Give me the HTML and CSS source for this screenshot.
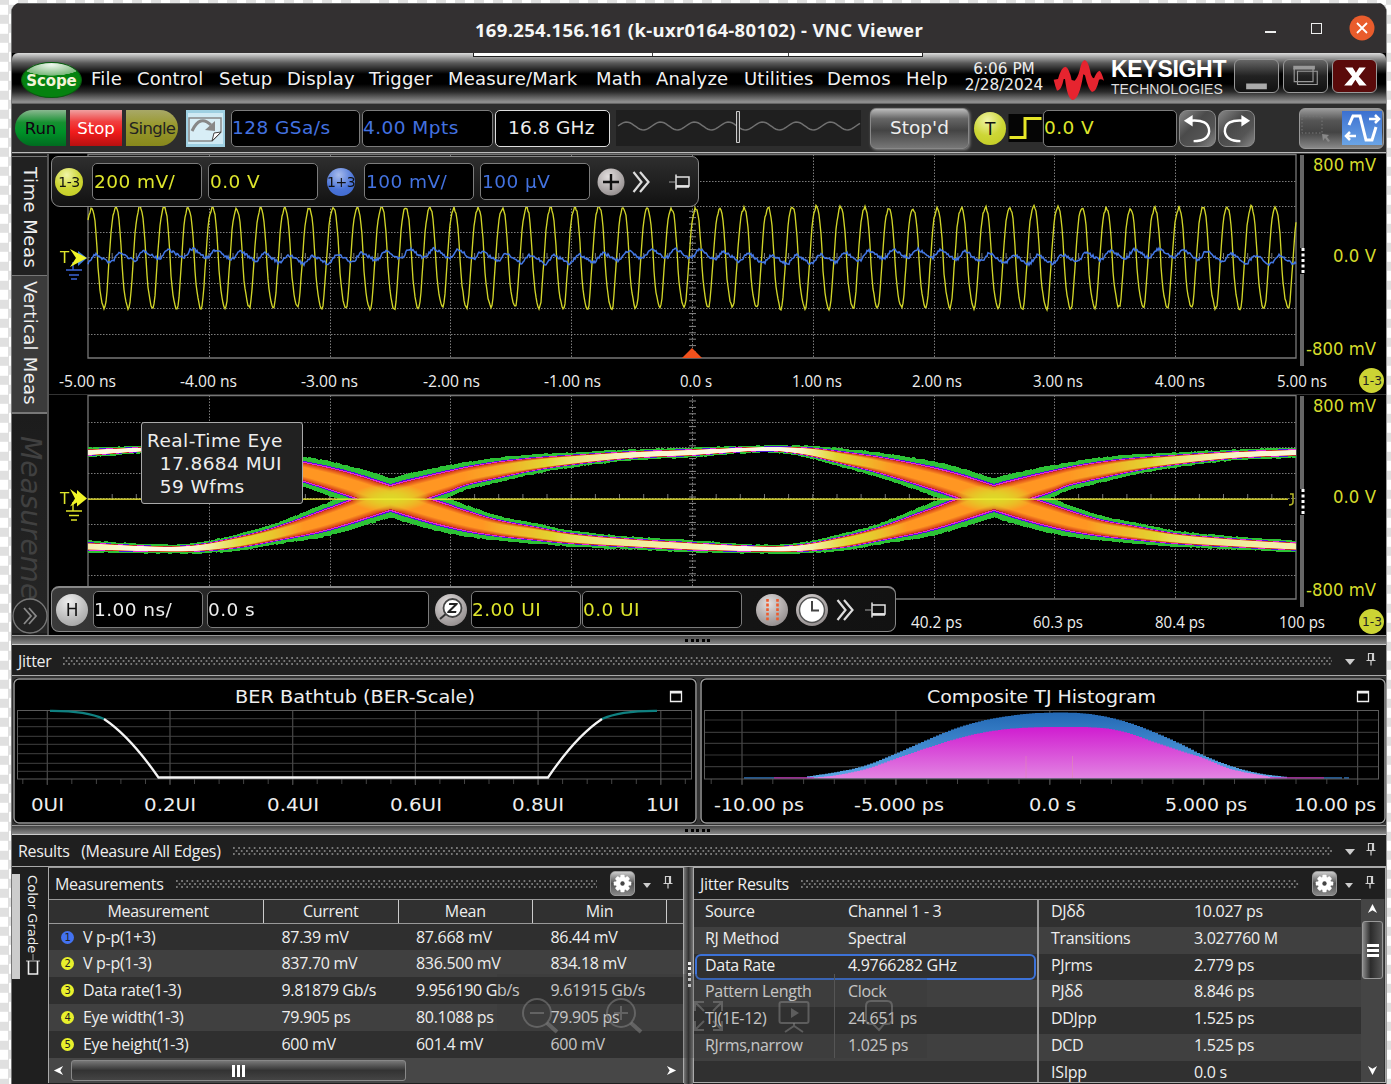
FILE: index.html
```html
<!DOCTYPE html>
<html lang="en">
<head>
<meta charset="utf-8">
<title>169.254.156.161 (k-uxr0164-80102) - VNC Viewer</title>
<link rel="stylesheet" href="styles.css">
</head>
<body>
<svg width="0" height="0" class="defs">
  <defs>
    <symbol id="pin-up" viewBox="0 0 10 14"><path d="M2.5 1.5h5v7h-5zM0.5 8.5h9M5 8.5v5M6.5 1.5v7" fill="none" stroke="#d0d0d0" stroke-width="1.2"/></symbol>
    <symbol id="pin-side" viewBox="0 0 24 16"><path d="M1 8h6" stroke="#777" stroke-width="1.5"/><path d="M8 0.5v15M8 3h13v9h-13" fill="none" stroke="#e4e4e4" stroke-width="1.5"/><path d="M8 12.5h13" stroke="#e4e4e4" stroke-width="2.5"/></symbol>
    <symbol id="chev" viewBox="0 0 18 22"><path d="M1.500 1l8 10-8 10M8 1l8.500 10-8.500 10" fill="none" stroke="#dcdcdc" stroke-width="2.200"/></symbol>
    <symbol id="gear" viewBox="0 0 20 20"><g fill="#fff"><circle cx="10" cy="10" r="7"/><g id="teeth"><rect x="7.800" y="0.800" width="4.400" height="18.400" rx="1"/><rect x="0.800" y="7.800" width="18.400" height="4.400" rx="1"/></g><use href="#teeth" transform="rotate(45 10 10)"/></g><circle cx="10" cy="10" r="2.300" fill="#444"/></symbol>
  </defs>
</svg>

<div class="window">
  <header class="titlebar">
    <h1>169.254.156.161 (k-uxr0164-80102) - VNC Viewer</h1>
    <div class="win-buttons">
      <i class="wb-min"></i><i class="wb-max"></i>
      <svg class="wb-close" viewBox="0 0 26 26"><circle cx="13" cy="13" r="12.500" fill="#e95c2c"/><path d="M8 8l10 10M18 8L8 18" stroke="#fff" stroke-width="1.800"/></svg>
    </div>
  </header>

  <nav class="menubar">
    <div class="vnc-handle"><i></i><i></i><i></i></div>
    <div class="scope-btn">Scope</div>
    <div class="menus">
      <span>File</span><span>Control</span><span>Setup</span><span>Display</span><span>Trigger</span><span>Measure/Mark</span><span>Math</span><span>Analyze</span><span>Utilities</span><span>Demos</span><span>Help</span>
    </div>
    <div class="clock"><div>6:06 PM</div><div>2/28/2024</div></div>
    <svg class="logo" viewBox="373 178 156 126"><path d="M375 240L388 238Q397 203 410 201Q421 203 429 241L438 243Q447 235 453 212Q458 184 468 181Q478 184 484 212Q488 235 496 236Q504 215 513 213Q519 218 526 243Q517 236 511 240Q503 277 490 277Q479 272 469 227L464 224Q452 300 432 301Q416 298 409 238L405 238Q399 272 385 273Q380 262 375 240Z" fill="#e6242f"/></svg>
    <div class="brand"><b>KEYSIGHT</b><span>TECHNOLOGIES</span></div>
    <div class="app-buttons">
      <svg viewBox="0 0 44 34"><path d="M11 25h22v6H11z" fill="#aaa"/></svg>
      <svg viewBox="0 0 44 34"><path d="M10 9h20v14H10zM13.500 12h21v14h-21z" fill="none" stroke="#999" stroke-width="1.200"/><path d="M9 6h23v4H9z" fill="#999"/></svg>
      <svg class="red" viewBox="0 0 44 34"><path d="M12 8h8l3.500 5.500L27 8h7l-7.500 9.500L35 27h-8l-4-6-4 6h-8l8.500-9.500z" fill="#fff"/></svg>
    </div>
  </nav>

  <section class="toolbar">
    <button class="run">Run</button><button class="stop">Stop</button><button class="single">Single</button>
    <svg class="clear" viewBox="0 0 39 37"><rect width="39" height="37" fill="#9fd0e2"/><rect x="2" y="3" width="35" height="31" fill="#cfeaf4"/><path d="M3 8h32v14l-9 9H3z" fill="#d8eef6" stroke="#888" stroke-width="1.500"/><path d="M26 31l2-8 7-1z" fill="#fff" stroke="#444"/><path d="M6 21Q14 4 25 15" fill="none" stroke="#888" stroke-width="3"/><path d="M29 11v10l-10-1z" fill="#888"/></svg>
    <div class="field blue f-rate">128 GSa/s</div>
    <div class="field blue f-pts">4.00 Mpts</div>
    <div class="field bw">16.8 GHz</div>
    <svg class="wavebar" viewBox="0 0 245 36"><rect width="245" height="36" fill="#1f1f1f"/><path id="slider-wave" fill="none" stroke="#707070" stroke-width="1.500"/><path d="M120.500 1.500h3v31h-3z" fill="#333" stroke="#ccc"/></svg>
    <div class="stopd">Stop'd</div>
    <div class="ball yellow trig">T</div>
    <svg class="edge" viewBox="0 0 34 28"><rect width="34" height="28" fill="#050505"/><path d="M1 23.500h15.500V4.500H33" fill="none" stroke="#e6e628" stroke-width="3"/></svg>
    <div class="field yellowt f-level">0.0 V</div>
    <div class="undo"><svg viewBox="0 0 36 36"><path d="M10 10Q30 8 30 21Q29 31 14 31" fill="none" stroke="#fff" stroke-width="2.500"/><path d="M4 10l9-6v12z" fill="#fff"/></svg><svg viewBox="0 0 36 36"><path d="M26 10Q6 8 6 21Q7 31 22 31" fill="none" stroke="#fff" stroke-width="2.500"/><path d="M32 10l-9-6v12z" fill="#fff"/></svg></div>
    <div class="modes"><svg viewBox="0 0 40 36"><rect x="2" y="6" width="20" height="17" fill="none" stroke="#777" stroke-dasharray="1.500 2"/><path d="M22 24l7 1-2 2 3 4-2 1-3-4-2 3z" fill="#888"/></svg><svg class="active" viewBox="0 0 40 34"><path d="M7 14L11 5h7l6 24h6l4-13" fill="none" stroke="#fff" stroke-width="3"/><path d="M27 8h9M33 4l4 4-4 4M14 25H5M8 21l-4 4 4 4" fill="none" stroke="#fff" stroke-width="2.500"/></svg></div>
  </section>

  <main class="scope">
    <aside class="tabs">
      <div class="tab t1">Time Meas</div>
      <div class="tab t2">Vertical Meas</div>
      <div class="tab t3">Measureme</div>
      <svg class="expand" viewBox="0 0 36 36"><circle cx="18" cy="18" r="17" fill="#222" fill-opacity=".8" stroke="#777" stroke-width="1.300"/><path d="M12 10l7 8-7 8M17 10l7 8-7 8" fill="none" stroke="#888" stroke-width="1.800"/></svg>
    </aside>
    <div class="display">
      <svg class="plots" id="plots" viewBox="49 153 1337 482"></svg>
      <canvas id="eye" class="eye" width="1208" height="204"></canvas>
      <svg class="marks" viewBox="49 153 1337 482">
        <g stroke="#3c66d8" stroke-width="1.400"><path d="M73 262v8M66 270h16M69 275h10M71 279h6"/></g>
        <path d="M78 251l9 7-9 8z" fill="#3c7be0"/><path d="M70 249l17 9-17 9 6-9z" fill="#f0f428"/>
        <text x="60" y="263" class="mk">T</text>
        <g stroke="#e0e428" stroke-width="1.400"><path d="M73 502v9M66 511h16M69 515.500h10M71 520h6"/></g>
        <path d="M70 489l7 5V490l10 8.500-10 8v-4l-7 4 5-8z" fill="#f0f428"/>
        <text x="60" y="504" class="mk">T</text>
        <path d="M1290 494h3v8q0 3-4 3" fill="none" stroke="#b8b828" stroke-width="1.500"/>
      </svg>
      <div class="strip top">
        <div class="ball yellow">1-3</div><div class="field yellowt">200 mV/</div><div class="field yellowt">0.0 V</div>
        <div class="ball blueb">1+3</div><div class="field blue">100 mV/</div><div class="field blue">100 µV</div>
        <svg class="plus" viewBox="0 0 28 28"><circle cx="14" cy="14" r="13.500" fill="url(#gball)"/><path d="M14 6v16M6 14h16" stroke="#111" stroke-width="2.400"/></svg>
        <svg class="chev"><use href="#chev"/></svg><svg class="pin"><use href="#pin-side"/></svg>
      </div>
      <div class="tip">Real-Time Eye<br>&nbsp; 17.8684 MUI<br>&nbsp; 59 Wfms</div>
      <div class="strip bottom">
        <div class="ball grey">H</div><div class="field">1.00 ns/</div><div class="field wide">0.0 s</div>
        <svg class="ico z" viewBox="0 0 32 32"><circle cx="16" cy="16" r="16" fill="url(#gball)"/><path d="M5 25l7-6" stroke="#333" stroke-width="2"/><circle cx="17.500" cy="14" r="9" fill="#fff" stroke="#444" stroke-width="1.800"/><text x="17.500" y="19" text-anchor="middle" class="zt">Z</text></svg>
        <div class="field yellowt">2.00 UI</div><div class="field yellowt mid">0.0 UI</div>
        <svg class="ico d" viewBox="0 0 32 32"><circle cx="16" cy="16" r="16" fill="url(#gball)"/><path d="M11.500 5v22M21.500 5v22" stroke="#ee5a2c" stroke-width="2.600" stroke-dasharray="2.800 1.800"/></svg>
        <svg class="ico c" viewBox="0 0 32 32"><circle cx="16" cy="16" r="16" fill="url(#gball)"/><circle cx="16" cy="16" r="12.500" fill="#fff" stroke="#555" stroke-width="1.500"/><path d="M16 7v9.500h7" fill="none" stroke="#444" stroke-width="2"/></svg>
        <svg class="chev"><use href="#chev"/></svg><svg class="pin"><use href="#pin-side"/></svg>
      </div>
    </div>
  </main>

  <div class="splitter"><i></i></div>
  <div class="panel-head"><span>Jitter</span><i class="dots"></i><b class="caret"></b><svg class="pinup"><use href="#pin-up"/></svg></div>
  <section class="charts">
    <svg class="chart" id="bathtub" viewBox="13 678 684 146"></svg>
    <svg class="chart" id="hist" viewBox="700 678 686 146"></svg>
  </section>
  <div class="splitter"><i></i></div>
  <div class="panel-head res"><span>Results &nbsp; (Measure All Edges)</span><i class="dots"></i><b class="caret"></b><svg class="pinup"><use href="#pin-up"/></svg></div>

  <section class="results">
    <aside class="grade"><i class="bar"></i><span>Color Grade</span><svg viewBox="0 0 16 22"><path d="M8 0v6M1 7h14" stroke="#888" stroke-width="1.300"/><path d="M3.500 7v13h9V7" fill="none" stroke="#eee" stroke-width="1.600"/></svg></aside>
    <div class="meas">
      <div class="sub-head"><span>Measurements</span><i class="dots"></i><b class="gear"><svg><use href="#gear"/></svg></b><b class="caret"></b><svg class="pinup"><use href="#pin-up"/></svg></div>
      <div class="mrow mh"><span>Measurement</span><span>Current</span><span>Mean</span><span>Min</span><span></span></div>
      <div class="mrow"><span><em class="n1">1</em>V p-p(1+3)</span><span>87.39 mV</span><span>87.668 mV</span><span>86.44 mV</span></div>
      <div class="mrow"><span><em>2</em>V p-p(1-3)</span><span>837.70 mV</span><span>836.500 mV</span><span>834.18 mV</span></div>
      <div class="mrow"><span><em>3</em>Data rate(1-3)</span><span>9.81879 Gb/s</span><span>9.956190 Gb/s</span><span>9.61915 Gb/s</span></div>
      <div class="mrow"><span><em>4</em>Eye width(1-3)</span><span>79.905 ps</span><span>80.1088 ps</span><span>79.905 ps</span></div>
      <div class="mrow"><span><em>5</em>Eye height(1-3)</span><span>600 mV</span><span>601.4 mV</span><span>600 mV</span></div>
      <div class="hscroll"><svg viewBox="0 0 12 12"><path d="M11 1L1 6l10 5-3-5z" fill="#fff"/></svg><div class="thumb"><i></i><i></i><i></i></div><svg viewBox="0 0 12 12"><path d="M1 1l10 5-10 5 3-5z" fill="#fff"/></svg></div>
    </div>
    <div class="vsplit"></div>
    <div class="jres">
      <div class="sub-head"><span>Jitter Results</span><i class="dots"></i><b class="gear"><svg><use href="#gear"/></svg></b><b class="caret"></b><svg class="pinup"><use href="#pin-up"/></svg></div>
      <div class="jbody">
        <div class="jcol">
          <div><span>Source</span><span>Channel 1 - 3</span></div><div><span>RJ Method</span><span>Spectral</span></div><div class="sel"><span>Data Rate</span><span>4.9766282 GHz</span></div><div><span>Pattern Length</span><span>Clock</span></div><div><span>TJ(1E-12)</span><span>24.651 ps</span></div><div><span>RJrms,narrow</span><span>1.025 ps</span></div><div></div>
        </div>
        <div class="jcol right">
          <div><span>DJδδ</span><span>10.027 ps</span></div><div><span>Transitions</span><span>3.027760 M</span></div><div><span>PJrms</span><span>2.779 ps</span></div><div><span>PJδδ</span><span>8.846 ps</span></div><div><span>DDJpp</span><span>1.525 ps</span></div><div><span>DCD</span><span>1.525 ps</span></div><div><span>ISIpp</span><span>0.0 s</span></div>
        </div>
        <div class="vscroll"><svg viewBox="0 0 12 12"><path d="M1 11L6 1l5 10-5-3z" fill="#fff"/></svg><div class="vthumb"><i></i><i></i><i></i></div><svg class="dn" viewBox="0 0 12 12"><path d="M1 1l5 10L11 1 6 4z" fill="#fff"/></svg></div>
      </div>
    </div>
    <svg class="ghost" viewBox="497 973 430 84">
      <rect x="497" y="973" width="430" height="84" fill="#333" fill-opacity=".22"/>
      <g fill="none" stroke="#8a8a8a" stroke-opacity=".5" stroke-width="2">
        <circle cx="537" cy="1012" r="14"/><path d="M530 1012h14"/><path d="M547 1022l10 9" stroke-width="4"/>
        <circle cx="621" cy="1012" r="14"/><path d="M614 1012h14M621 1005v14"/><path d="M631 1022l10 9" stroke-width="4"/>
        <path d="M695 1010v-9h9M695 1001l9 9M713 1001h9v9M722 1001l-9 9M695 1020v9h9M695 1029l9-9M722 1020v9h-9M722 1029l-9-9"/>
        <rect x="779.500" y="1001" width="29" height="21" rx="2"/><path d="M794 1022v4M785 1031l9-6 9 6"/><path d="M791 1007l8 5-8 5z" fill="#8a8a8a" fill-opacity=".5" stroke="none"/>
        <path d="M873 1023h-2q-5 0-5-5v-13q0-5 5-5h16q5 0 5 5v13q0 5-5 5h-3l-5 6z"/>
      </g>
      <path d="M834.500 973v84" stroke="#555"/>
    </svg>
  </section>
</div>
<svg width="0" height="0" class="defs"><defs><radialGradient id="gball" cx=".4" cy=".3" r=".8"><stop offset="0" stop-color="#e2dede"/><stop offset="1" stop-color="#8c8686"/></radialGradient></defs></svg>
<script src="plots.js"></script>
</body>
</html>
```
FILE: styles.css
```css
* { box-sizing: border-box; }
body {
  margin: 0; height: 1084px; overflow: hidden; padding: 3px 4px 0 11px;
  background: repeating-conic-gradient(#e0e0e0 0 25%, #fff 0 50%) -1px 4.8px / 19px 19px;
  font-family: "DejaVu Sans", sans-serif; font-size: 18px; color: #eee;
}
.defs { position: absolute; }
.window { height: 1081px; display: flex; flex-direction: column; background: #000; border-radius: 9px 9px 0 0; overflow: hidden; border-left: 1px solid #777; border-right: 1px solid #999; }
.window > * { flex: none; }
button { font: inherit; border: 0; padding: 0; }

.titlebar { height: 50px; background: #333031; display: flex; align-items: center; border-top: 1px solid #666; position: relative; justify-content: center; padding-top: 1px; }
.titlebar h1 { margin: 0; font: bold 18.500px "Noto Sans", "Open Sans", sans-serif; color: #f6f6f6; letter-spacing: .35px; white-space: nowrap; }
.win-buttons { position: absolute; right: 11px; top: 0; height: 49px; display: flex; align-items: center; }
.wb-min { width: 11px; height: 2px; background: #eee; margin: 6px 35px 0 0; }
.wb-max { width: 11px; height: 11px; border: 1.5px solid #eee; margin-right: 27px; }
.wb-close { width: 26px; height: 26px; margin-top: -2px; }

.menubar { height: 51px; display: flex; align-items: center; position: relative; padding-left: 9px; border-radius: 6px 6px 0 0; border-bottom: 1px solid #666;
  background: linear-gradient(#ddd 0, #999 10%, #5a5a5a 20%, #2a2a2a 32%, #000 42%, #000 62%, #2c2c2c 78%, #8c8c8c 97%); }
.vnc-handle { position: absolute; left: 461px; top: 0; width: 450px; height: 4px; display: flex; border: 1px solid #222; border-top: 0; background: #fff; }
.vnc-handle i { flex: 0 0 179px; border-right: 1px solid #444; }
.vnc-handle i + i { flex-basis: 136px; }
.vnc-handle i:last-child { border: 0; }
.scope-btn { width: 61px; height: 36px; margin-top: 3px; border-radius: 50%; background: radial-gradient(ellipse 75% 45% at 50% 5%, #f0f8f0 0, #7ab87a 70%, transparent 72%), #05820f; border: 1px solid #0a5a10; font-weight: bold; font-size: 15px; text-align: center; line-height: 37px; color: #f4f4d8; letter-spacing: -.1px; }
.menus { display: grid; grid-template-columns: 46px 82px 68px 82px 79px 148px 60px 88px 83px 79px 46px; margin-left: 9px; white-space: nowrap; color: #f2f2f2; letter-spacing: .2px; }
.clock { width: 86px; margin: -3px 0 0 9px; text-align: center; font-size: 15.300px; line-height: 16px; color: #eee; letter-spacing: 0; }
.logo { width: 52px; height: 42px; margin: 3px 0 0 6px; }
.brand { margin: -1px 0 0 6px; width: 123px; line-height: 1; white-space: nowrap; font-family: "Liberation Sans", Arial, sans-serif; }
.brand b { display: block; font-size: 23px; letter-spacing: -.3px; height: 21px; color: #fff; }
.brand span { font-size: 14px; letter-spacing: .05px; color: #ddd; }
.app-buttons { display: flex; gap: 4px; margin-top: -5px; }
.app-buttons svg { width: 45px; height: 34px; border: 1.5px solid #999; border-radius: 6px; background: linear-gradient(#666, #222 50%, #111); }
.app-buttons svg.red { background: #5a0a0a; }

.toolbar { height: 49px; background: #2d2d2d; display: flex; align-items: center; border-bottom: 1px solid #bbb; padding-left: 3px; }
.toolbar > * { flex: none; }
.run, .stop, .single { height: 36px; font-size: 16.5px; }
.run { width: 51px; border-radius: 18px 0 0 18px; background: linear-gradient(#8ab890, #159030 35%, #009228 60%, #006c20); color: #101; margin-right: 4px; }
.stop { width: 52px; background: linear-gradient(#f0a0a0, #f04040 32%, #f21c1c 60%, #b81010); color: #fff; margin-right: 4px; }
.single { width: 52px; border-radius: 0 18px 18px 0; background: linear-gradient(#a8a868, #9a9a30 40%, #88881c); color: #222; letter-spacing: -.7px; }
.clear { width: 39px; height: 37px; margin: 0 6px 0 8px; }
.field { background: #000; border: 1.5px solid #7c7c7c; border-radius: 5px; height: 37px; line-height: 35px; padding-left: 0; white-space: nowrap; width: 110px; font-size: 18.500px; letter-spacing: .45px; flex: none; }
.blue { color: #4372e0; }
.yellowt { color: #dfe62c; }
.f-rate { width: 129px; margin-right: 2px; }
.f-pts { width: 131px; margin-right: 2px; }
.toolbar .field { line-height: 34px; }
.bw { width: 115px; border-color: #ddd; padding-left: 12px; letter-spacing: .2px; }
.wavebar { width: 245px; height: 36px; margin: 0 9px 0 6px; }
.stopd { width: 99px; height: 41px; border-radius: 6px; border: 1px solid #888; background: linear-gradient(#bbb, #666 25%, #444 55%, #777); text-align: center; line-height: 38px; margin-right: 5px; box-shadow: 1px 1px 3px #888; font-size: 18.500px; }
.ball { border-radius: 50%; width: 28px; height: 28px; line-height: 28px; text-align: center; font-size: 14px; letter-spacing: -.5px; color: #111; flex: none; white-space: nowrap; }
.ball.yellow { background: radial-gradient(circle at 42% 25%, #f0f4a8, #cdd636 50%, #c2ca20); }
.ball.blueb { background: radial-gradient(circle at 42% 25%, #a8bcec, #4a74d8 55%, #3c66cc); }
.ball.grey { background: radial-gradient(circle at 40% 25%, #eee, #b8b8b8 60%, #999); width: 32px; height: 32px; line-height: 33px; font-size: 17px; }
.ball.trig { width: 32px; height: 33px; line-height: 34px; font-size: 17px; margin-right: 2px; }
.edge { width: 35px; height: 28px; }
.f-level { width: 134px; }
.undo { display: flex; gap: 2px; margin: 0 44px 0 2px; }
.undo svg { width: 37px; height: 37px; border-radius: 8px; border: 1px solid #888; background: linear-gradient(135deg, #888, #4a4a4a 40%, #555 70%, #888); }
.modes { width: 85px; height: 41px; border: 1.5px solid #999; border-radius: 6px; display: flex; align-items: center; justify-content: space-between; background: linear-gradient(#999, #555 30%, #444 60%, #888); padding-right: 1px; }
.modes svg { width: 40px; height: 36px; }
.modes .active { height: 34px; background: linear-gradient(#3c70d0, #6aa4e6); }

.scope { height: 482px; display: flex; border-top: 1px solid #444; }
.tabs { width: 37px; border-right: 2px solid #555; display: flex; flex-direction: column; position: relative; background: #1c1c1c; padding-top: 2px; }
.tab { writing-mode: vertical-rl; width: 35px; line-height: 33px; border-top: 1px solid #777; overflow: hidden; white-space: nowrap; flex: none; }
.t1 { height: 119px; padding-top: 10px; background: #212121; letter-spacing: .5px; }
.t2 { height: 137px; padding-top: 5px; background: #3b3b3b; letter-spacing: .3px; }
.t3 { height: 221px; border-top: 2px solid #777; padding-top: 22px; font-size: 28px; font-style: italic; color: #404040; background: linear-gradient(#1c1c1c, #262626); }
.expand { position: absolute; left: 0; top: 444px; width: 36px; height: 36px; }
.display { position: relative; width: 1337px; background: #000; }
.plots, .marks { position: absolute; left: 0; top: -1px; width: 1337px; height: 482px; }
.eye { position: absolute; left: 39px; top: 242px; }
.plots text { fill: #eee; font-size: 16px; font-family: "Open Sans", sans-serif; }
.plots .yv { fill: #d6dc2c; font-family: "DejaVu Sans", sans-serif; font-size: 17.500px; }
.plots .bt { fill: #222; font-family: "DejaVu Sans", sans-serif; font-size: 13px; }
.mk { fill: #dfe62c; font-size: 15px; }
.strip { position: absolute; left: 2px; display: flex; align-items: center; border: 1.5px solid #888; background: linear-gradient(#2e2e2e, #121212); }
.strip.top { top: 2px; width: 648px; height: 51px; border-radius: 7px 7px 9px 9px; padding-left: 3px; }
.strip.top .field { margin-right: 6px; padding-left: 1px; }
.strip.top .ball { margin-right: 9px; }
.strip.top .blueb { margin-left: 3px; }
.plus { width: 28px; height: 28px; margin-left: 1px; }
.chev { width: 18px; height: 22px; margin-left: 7px; }
.pin { width: 24px; height: 16px; margin-left: 18px; }
.strip.bottom { top: 432px; width: 845px; height: 46px; border-radius: 8px; padding-left: 4px; border-top-width: 2px; background: linear-gradient(90deg, #3a3a3a, #1a1a1a 30%, #121212); }
.bottom .grey { margin-right: 5px; }
.bottom .field { margin-right: 4px; }
.bottom .wide { width: 222px; margin-right: 6px; }
.bottom .field.yellowt { margin-right: 1px; }
.bottom .field.mid { width: 160px; margin-right: 14px; }
.ico { width: 32px; height: 32px; flex: none; }
.ico.z { margin-right: 4px; }
.ico.c { margin-left: 8px; }
.zt { font: italic bold 14px "DejaVu Sans", sans-serif; fill: #222; }
.bottom .chev { margin-left: 8px; }
.bottom .pin { margin-left: 10px; }
.tip { position: absolute; left: 92px; top: 268px; width: 162px; height: 82px; background: #212121; border: 1px solid #aaa; border-radius: 3px; padding: 6px 0 0 5px; font-size: 18.500px; line-height: 23px; white-space: nowrap; letter-spacing: .45px; }

.splitter { height: 10px; border-top: 1px solid #999; border-bottom: 1px solid #ccc; background: linear-gradient(#444, #888); display: flex; justify-content: center; align-items: center; }
.splitter i { width: 26px; height: 3px; margin-left: -2px; background: repeating-linear-gradient(90deg, #000 0 3px, transparent 3px 5.500px); }
.panel-head, .sub-head { display: flex; align-items: center; font: 16px "Open Sans", sans-serif; letter-spacing: -.3px; background: #1f1f1f; }
.panel-head { height: 31px; padding: 1px 10px 0 6px; border-bottom: 1px solid #aaa; }
.panel-head.res { height: 32px; padding-top: 0; }
.panel-head span, .sub-head span { white-space: nowrap; }
.dots { flex: 1; height: 8px; margin: 0 13px 0 12px; background: radial-gradient(circle at 1px 1px, #777 .8px, transparent 1px) 0 0 / 5.200px 6px, radial-gradient(circle at 1px 1px, #777 .8px, transparent 1px) 2.600px 3px / 5.200px 6px; }
.caret { border: 5px solid transparent; border-top: 6px solid #ccc; border-bottom: 0; margin: 3px 11px 0 0; }
.pinup { width: 10px; height: 14px; margin-top: -3px; }
.charts { height: 149px; display: flex; padding: 2px 0 0 1px; gap: 3px; background: #333; }
.chart { width: 684px; height: 146px; background: #000; border-radius: 5px; }
#hist { width: 686px; }
.chart text { font-size: 18px; fill: #eee; }

.results { height: 218px; display: flex; position: relative; font: 16px "Open Sans", sans-serif; letter-spacing: -.3px; background: #1f1f1f; }
.grade { width: 36px; position: relative; writing-mode: vertical-rl; font: 13px "DejaVu Sans", sans-serif; display: flex; align-items: center; padding: 8px 0 0 5px; letter-spacing: .05px; }
.grade .bar { position: absolute; left: 0; top: 7px; width: 8px; height: 105px; background: #ccc; }
.grade svg { width: 16px; height: 22px; margin-top: 1px; }
.meas { width: 636px; border: 1.5px solid #aaa; border-top-color: #999; background: #303030; height: 216px; }
.sub-head { height: 31px; padding: 0 10px 0 6px; }
.gear { width: 25px; height: 25px; border: 1.500px solid #999; border-radius: 5px; background: linear-gradient(#ccc, #555 50%, #888); display: flex; align-items: center; justify-content: center; margin-right: 8px; }
.gear svg { width: 19px; height: 19px; }
.gear + .caret { border-width: 4.500px; border-top-width: 5px; border-bottom: 0; margin-right: 12px; }
.mrow { display: grid; grid-template-columns: 215px 134.500px 134.500px 134px 1fr; height: 27px; line-height: 26px; white-space: nowrap; }
.mrow:nth-child(odd) { background: #2f2f2f; }
.mrow:nth-child(even) { background: #404040; }
.mrow:nth-child(3) { height: 26px; }
.mrow span { padding-left: 17.500px; }
.mrow > span:first-child { padding-left: 12px; }
.mrow em { display: inline-block; width: 13px; height: 13px; margin-right: 9px; border-radius: 50%; background: #e8f02c; color: #222; font: 10px/13px "DejaVu Sans", sans-serif; text-align: center; vertical-align: 2px; }
.mrow em.n1 { background: #4372f0; }
.mrow.mh { height: 25px; line-height: 22px; border-top: 1.500px solid #999; border-bottom: 1.500px solid #999; background: #303030; }
.mrow.mh span { padding: 0; text-align: center; border-right: 1.500px solid #ccc; }
.mrow.mh > span:first-child { padding-left: 4px; }
.mrow.mh span:last-child { border: 0; }
.hscroll { height: 25px; background: #474747; display: flex; align-items: center; padding: 0 6px 0 4px; }
.hscroll svg { width: 11px; height: 11px; }
.thumb { width: 335px; height: 21px; margin: 0 auto 0 7px; border: 1.500px solid #888; border-radius: 3px; background: linear-gradient(#777, #333 50%, #444); display: flex; justify-content: center; align-items: center; gap: 2px; }
.thumb i { width: 3px; height: 12px; background: #fff; }
.vsplit { width: 9px; background: linear-gradient(90deg, #777, #333, #777); display: flex; }
.vsplit::after { content: ""; width: 3px; height: 25px; margin: 95px 0 0 4px; background: repeating-linear-gradient(#eee 0 3px, transparent 3px 5.500px); }
.jres { flex: 1; border: 1.500px solid #aaa; height: 216px; background: #303030; overflow: hidden; }
.jbody { display: flex; height: 183px; }
.jcol { width: 345px; border-top: 1.500px solid #999; border-right: 2px solid #999; }
.jcol.right { width: 322px; border-right: 0; }
.jcol div { height: 26.800px; line-height: 22px; display: grid; grid-template-columns: 143px 1fr; padding-left: 11px; background: #303030; white-space: nowrap; }
.jcol div:nth-child(even) { background: #404040; }
.jcol.right div { padding-left: 12px; }
.jcol .sel { border: 2.500px solid #3c72d8; border-radius: 6px; margin: 0 1px .800px; padding-left: 8px; line-height: 18px; height: 26px; }
.vscroll { width: 23px; background: #454545; display: flex; flex-direction: column; align-items: center; padding-top: 4px; }
.vscroll svg { width: 11px; height: 11px; }
.vthumb { width: 21px; height: 58px; border: 1.500px solid #999; border-radius: 3px; margin-top: 7px; background: linear-gradient(90deg, #888, #2c2c2c 40%, #555); display: flex; flex-direction: column; align-items: center; justify-content: center; gap: 2px; }
.vthumb i { width: 12px; height: 3px; background: #fff; }
.vscroll .dn { margin: auto 0 6px; }
.ghost { position: absolute; left: 485px; top: 107px; width: 430px; height: 84px; }
```
FILE: plots.js
```js
// Deterministic noise, so that the traces look the same at every load
let seed = 7;
const rnd = () => ((seed = (seed * 16807) % 2147483647) / 2147483647) - 0.5;

// Piecewise cubic interpolation through [x, y] pairs
function curve(pts) {
  return x => {
    let i = 0;
    while (i < pts.length - 2 && x > pts[i + 1][0]) i++;
    const slope = k => {
      const a = pts[Math.max(0, k - 1)], b = pts[Math.min(pts.length - 1, k + 1)];
      return (b[1] - a[1]) / (b[0] - a[0]);
    };
    const [x0, y0] = pts[i], [x1, y1] = pts[i + 1], h = x1 - x0, t = (x - x0) / h;
    const t2 = t * t, t3 = t2 * t;
    return (2 * t3 - 3 * t2 + 1) * y0 + (t3 - 2 * t2 + t) * h * slope(i) + (3 * t2 - 2 * t3) * y1 + (t3 - t2) * h * slope(i + 1);
  };
}
const txt = (s, x, y, w, cls = "") => `<text x="${x}" y="${y}" textLength="${w}" lengthAdjust="spacingAndGlyphs" class="${cls}">${s}</text>`;
const DIV = 120.8;

// Graticules
function grid(top, bottom, mid) {
  let s = "";
  for (let i = 1; i < 10; i++) s += `<path d="M${Math.round(88 + i * DIV) + .5} ${top}V${bottom}" stroke="#7c7c7c" stroke-dasharray="1.500 1.500"/>`;
  for (let i = -3; i < 4; i++) s += `<path d="M88 ${Math.round(mid + i * 25.5) + .5}H1296" stroke="#7c7c7c" stroke-dasharray="1.500 1.500"/>`;
  for (let i = 1; i < 50; i++) s += `<path d="M${(88 + i * DIV / 5).toFixed(1)} ${mid - 4}v6" stroke="#777"/>`;
  for (let y = mid - 97; y < bottom; y += 6.4) s += `<path d="M689 ${y.toFixed(1)}h7" stroke="#888"/>`;
  return s + `<path d="M88 ${top}H1296V${bottom}H88Z" fill="none" stroke="#777" stroke-width="1.300"/>`;
}
let p = grid(154.5, 358, 257) + grid(395.5, 599, 498);

const cyc = curve([[0, 0], [2.7, 10], [5, 37], [6.7, 67], [9.3, 90], [12.3, 101], [14.3, 94], [17, 57], [20, 17], [23, 2], [24.16, 0]]);
let yel = "", blu = "";
for (let x = 88; x <= 1296; x += 1) {
  const ph = (((x - 91.8) % 24.16) + 24.16) % 24.16;
  const n = Math.floor((x - 91.8) / 24.16);
  const stretch = 1 + 0.02 * Math.sin(n * .7);
  yel += `${x === 88 ? "M" : "L"}${x} ${(257 + (cyc(ph) - 50) * stretch + rnd() * 3).toFixed(1)}`;
  const saw = Math.sin((x - 91) / 24.16 * 2 * Math.PI) * -4 - Math.sin((x - 91) / 12.08 * 2 * Math.PI) * .8;
  blu += `${x === 88 ? "M" : "L"}${x} ${(256.500 + saw + 3.200 * Math.cos((x - 70) / 241 * 2 * Math.PI) + rnd() * 3).toFixed(1)}`;
}
p += `<path d="${yel}" fill="none" stroke="#d0d428" stroke-width="1.350"/><path d="${blu}" fill="none" stroke="#4377e4" stroke-width="1.500"/>`;
p += `<path d="M682 358l10-10 10 10z" fill="#f0501c"/><path d="M49 394.500H1386" stroke="#333"/>`;
p += `<path d="M1302 155V366M1302 396V607" stroke="#666" stroke-width="4"/><path d="M1302 248V274M1302 489V515" stroke="#000" stroke-width="5"/><path d="M1303 248V274M1303 489V515" stroke="#fff" stroke-width="3" stroke-dasharray="3 2.500"/>`;
[["-5.00 ns", 59], ["-4.00 ns", 180], ["-3.00 ns", 301], ["-2.00 ns", 423], ["-1.00 ns", 544], ["0.0 s", 680, 32], ["1.00 ns", 792, 50], ["2.00 ns", 912, 50], ["3.00 ns", 1033, 50], ["4.00 ns", 1155, 50], ["5.00 ns", 1277, 50]]
  .forEach(([s, x, w = 57]) => p += txt(s, x, 387, w));
[["40.2 ps", 911, 51], ["60.3 ps", 1033, 50], ["80.4 ps", 1155, 50], ["100 ps", 1279, 46]].forEach(([s, x, w]) => p += txt(s, x, 628, w));
for (const o of [0, 241])
  p += txt("800 mV", 1313, 171 + o, 63, "yv") + txt("0.0 V", 1333, 262 + o, 43, "yv") + txt("-800 mV", 1306, 355 + o, 70, "yv") +
    `<circle cx="1371.500" cy="${380.5 + o}" r="12.500" fill="#ccd434"/>` + txt("1-3", 1362, 385 + o, 20, "bt");
document.getElementById("plots").innerHTML = p;

// Eye diagram: each trace is a band [upper edge, lower edge] around a crossing
const fall = [
  curve([[-303, 447], [-229, 445], [-183, 445], [-151, 448], [-115, 452], [-65, 460], [-35, 467], [0, 478], [58, 498], [74, 504], [107, 515], [141, 522], [181, 530], [241, 536], [303, 540]]),
  curve([[-303, 457], [-229, 452], [-193, 456], [-151, 467], [-115, 477], [-65, 494], [0, 517], [37, 528], [74, 536], [107, 540], [141, 543], [181, 546], [241, 549], [303, 552]])];
const rise = [
  curve([[-303, 540], [-229, 544], [-193, 542], [-151, 533], [-115, 523], [-65, 503], [0, 478], [37, 469], [74, 462], [107, 457], [141, 454], [181, 452], [241, 449], [303, 447]]),
  curve([[-303, 552], [-229, 553], [-193, 553], [-151, 550], [-115, 544], [-65, 536], [0, 517], [58, 497], [74, 490], [107, 482], [141, 474], [181, 467], [241, 460], [303, 457]])];
const mix = (a, b, t) => { t = Math.max(0, Math.min(1, t)); return a.map((v, i) => v + (b[i] - v) * t); };
function shade(t, h) {
  if (t < .28) return [44, 194, 54];
  if (t < .34) return [80, 20, 220];
  if (t < .40) return [232, 40, 220];
  if (t < .44) return [190, 40, 50];
  const core = h > 9 ? mix([226, 212, 48], [255, 150, 34], (h - 9) / 5) : mix([252, 250, 225], [226, 212, 48], (h - 4.8) / 4.2);
  const ramp = h < 8 ? .12 : .12 + Math.min(h - 8, 5) / 5 * .14;
  return mix([215, 65, 25], core, (t - .44) / ramp);
}
const ctx = document.getElementById("eye").getContext("2d");
const img = ctx.createImageData(1208, 204);
let jit = [0, 0, 0, 0];
for (let c = 0; c < 1208; c++) {
  const x = c + 88, xc = x < 692 ? 390 : 993.5, dx = x - xc;
  if (c % 4 === 0) jit = jit.map(() => rnd() * .9);
  const bands = [fall, rise].map(b => [b[0](dx), b[1](dx)]);
  for (let r = 0; r < 204; r++) {
    const y = r + 396;
    let best = -1, h = 0;
    bands.forEach(([a, b], k) => {
      const mid = (a + b) / 2, hh = (b - a) / 2, off = y - mid;
      let t = 1 - Math.abs(off) / hh;
      // the noise moves only the outer rim
      if (t < .28 && Math.abs(off) > hh + jit[k * 2 + (off > 0 ? 1 : 0)]) t = -1;
      else if (t <= 0 && Math.abs(off) <= hh + jit[k * 2 + (off > 0 ? 1 : 0)]) t = .01;
      if (t > best) { best = t; h = hh; }
    });
    if (best <= 0) continue;
    let col = shade(best, h);
    const blob = Math.hypot(dx / 40, (y - 497.5) / 14);
    if (blob < 1 && best > .44) col = mix([222, 214, 40], col, blob * blob);
    const o = (r * 1208 + c) * 4;
    img.data[o] = col[0]; img.data[o + 1] = col[1]; img.data[o + 2] = col[2]; img.data[o + 3] = 255;
  }
}
ctx.putImageData(img, 0, 0);
ctx.fillStyle = "#f0ec30";
ctx.fillRect(0, 102.5, 1200, 1.3);

// Horizontal position slider
let w = "M2 16";
for (let x = 2; x <= 244; x += 2) w += `L${x} ${(16 - 4 * Math.sin((x - 2) / 34 * 2 * Math.PI)).toFixed(1)}`;
document.getElementById("slider-wave").setAttribute("d", w);

// BER bathtub
const frame = (x, w) => `<rect x="${x}" y="679" width="${w}" height="144" rx="5" fill="#000" stroke="#999" stroke-width="1.500"/>`;
const maxIcon = x => `<path d="M${x} 691.500h11v10h-11z" fill="none" stroke="#eee" stroke-width="1.300"/><path d="M${x} 692.500h11" stroke="#eee" stroke-width="2"/>`;
let b = frame(14, 682) + txt("BER Bathtub (BER-Scale)", 235, 703, 240) + maxIcon(670.5);
for (const y of [718.7, 726.7, 736.3, 744.3, 753.7, 763.3, 771.3]) b += `<path d="M17 ${y}H692" stroke="#333" stroke-width="1.200"/>`;
for (let i = 0; i < 6; i++) b += `<path d="M${47.3 + i * 122.7} 711V785" stroke="#484848" stroke-width="1.200"/>`;
for (let i = -1; i < 27; i++) b += `<path d="M${(47.3 + i * 24.54).toFixed(1)} 779v5" stroke="#444"/>`;
b += `<rect x="17.500" y="710.500" width="674" height="68.500" fill="none" stroke="#5c5c5c"/>`;
b += `<g fill="none"><path d="M50 710.800Q86 710.500 104 719M657 710.800Q620 710.500 602 719" stroke="#0f8080" stroke-width="2.200"/><path d="M104 719C122 731 138 748 158.500 777.500H548C568 748 584 731 602 719" stroke="#f4f4f4" stroke-width="2.300"/></g>`;
[["0UI", 31, 33], ["0.2UI", 144, 52], ["0.4UI", 267, 52], ["0.6UI", 390, 52], ["0.8UI", 512, 52], ["1UI", 646, 33]].forEach(([s, x, w]) => b += txt(s, x, 810.5, w));
document.getElementById("bathtub").innerHTML = b;

// Composite TJ histogram
let g = frame(701, 684) + `<defs><linearGradient id="hb" x2="0" y2="1"><stop stop-color="#2368b4"/><stop offset="1" stop-color="#5ca8e8"/></linearGradient><linearGradient id="hm" x2="0" y2="1"><stop stop-color="#d01cd0"/><stop offset="1" stop-color="#e284e2"/></linearGradient></defs>`;
g += txt("Composite TJ Histogram", 927, 703, 229) + maxIcon(1357.5);
for (const y of [720, 732.3, 743.3, 755, 766.7]) g += `<path d="M704 ${y}H1379" stroke="#363636" stroke-width="1.200"/>`;
for (let i = 0; i < 5; i++) g += `<path d="M${742 + i * 153.9} 711V785" stroke="#484848" stroke-width="1.200"/>`;
for (let i = -1; i < 21; i++) g += `<path d="M${(742 + i * 30.78).toFixed(1)} 779v5" stroke="#444"/>`;
const bars = (pts, x0, x1, fill) => {
  const f = curve(pts); let d = `M${x0} 778.500`;
  for (let x = x0; x < x1; x += 3) d += `V${(Math.min(777.6, f(x + 1.5))).toFixed(1)}h3`;
  return `<path d="${d}V778.500Z" fill="url(#${fill})"/>`;
};
g += bars([[807, 776.5], [834, 772.5], [864, 766], [895, 754], [927, 740], [957, 728], [988, 719.5], [1020, 714.5], [1038, 713], [1079, 713], [1106, 716.7], [1133, 724], [1161, 735], [1183, 745], [1203, 755], [1231, 766], [1260, 773.5], [1288, 777]], 807, 1287, "hb");
g += bars([[810, 778], [834, 775.5], [866, 769], [895, 759], [927, 748], [957, 738.7], [988, 731.7], [1020, 728], [1065, 727], [1102, 728], [1127, 732.7], [1156, 742.7], [1183, 751.7], [1203, 758], [1231, 769], [1271, 777]], 812, 1272, "hm");
g += `<path d="M744 778h30M1324 778h18M1344 778h5" stroke="#2e74bc" stroke-width="1.500"/><path d="M774 778h40M1270 778h54" stroke="#c83cc0" stroke-width="1.500"/><path d="M1026 756v22M1072.500 756v22" stroke="#e08ab0" stroke-opacity=".6"/>`;
g += `<rect x="704.500" y="710.500" width="674" height="68.500" fill="none" stroke="#5c5c5c"/>`;
[["-10.00 ps", 714, 90], ["-5.000 ps", 854, 90], ["0.0 s", 1029, 47], ["5.000 ps", 1165, 82], ["10.00 ps", 1294, 82]].forEach(([s, x, w]) => g += txt(s, x, 810.5, w));
document.getElementById("hist").innerHTML = g;
```
